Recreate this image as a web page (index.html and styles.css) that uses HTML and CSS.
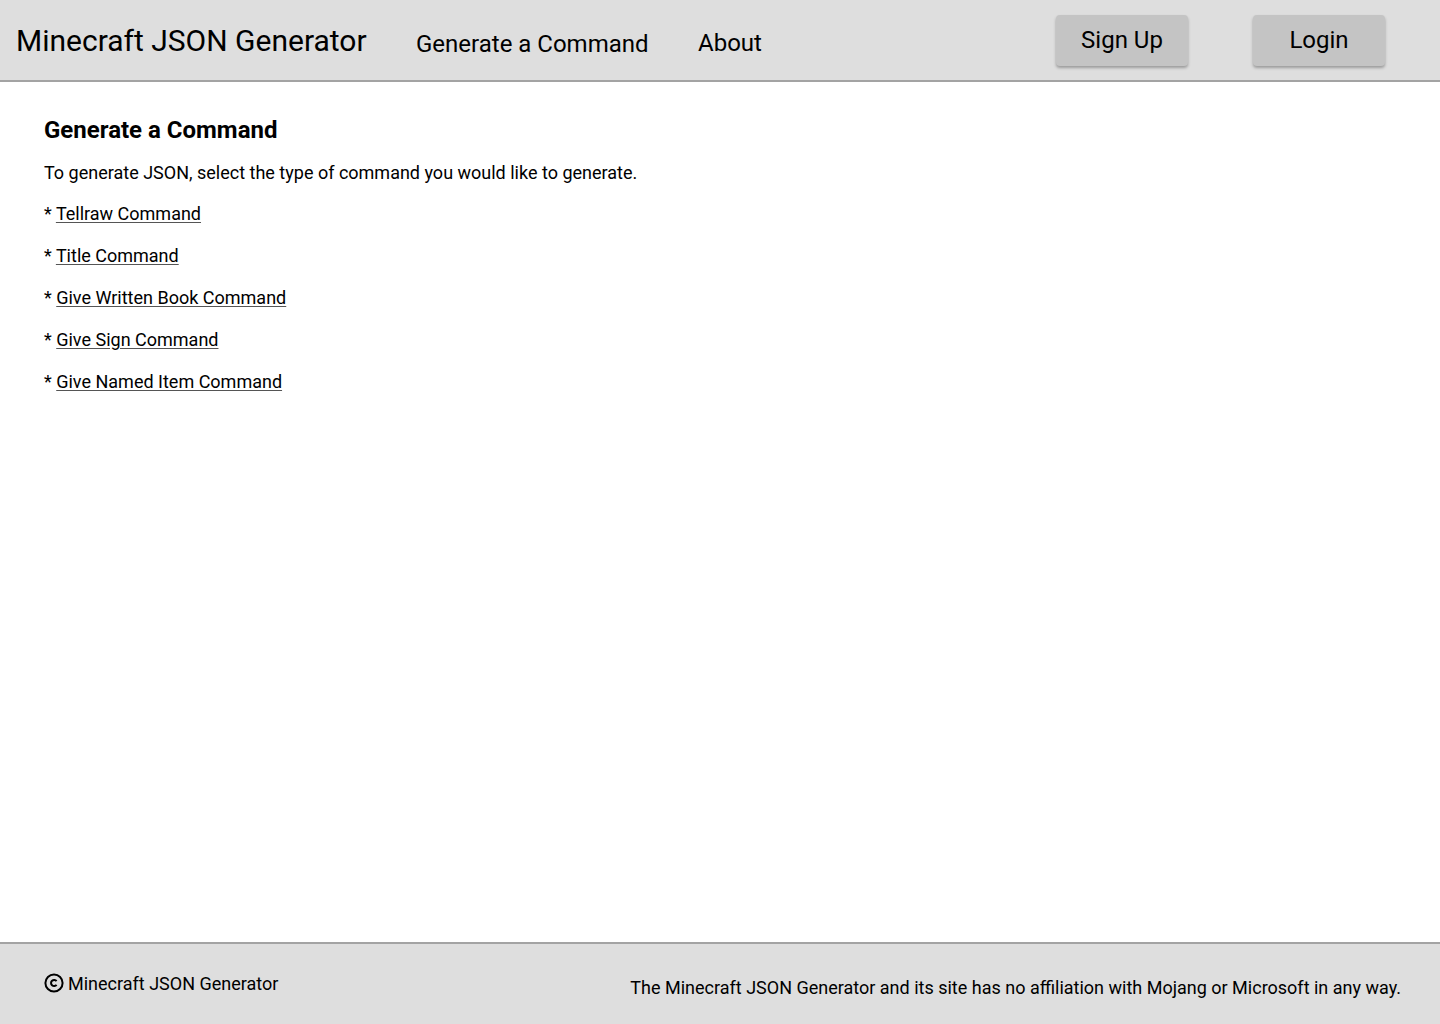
FILE: index.html
```html
<!DOCTYPE html>
<html lang="en">
<head>
<meta charset="utf-8">
<title>Minecraft JSON Generator</title>
<link rel="stylesheet" href="styles.css">
</head>
<body>
<div class="page">
  <header class="topbar">
    <div class="brand">Minecraft JSON Generator</div>
    <nav class="nav">
      <a class="nav-link nav-gen" href="#">Generate a Command</a>
      <a class="nav-link nav-about" href="#">About</a>
    </nav>
    <div class="actions">
      <button class="btn">Sign Up</button>
      <button class="btn">Login</button>
    </div>
  </header>
  <main class="content">
    <h1 class="title">Generate a Command</h1>
    <p class="intro">To generate JSON, select the type of command you would like to generate.</p>
    <ul class="cmd-list">
      <li>* <a href="#">Tellraw Command</a></li>
      <li>* <a href="#">Title Command</a></li>
      <li>* <a href="#">Give Written Book Command</a></li>
      <li>* <a href="#">Give Sign Command</a></li>
      <li>* <a href="#">Give Named Item Command</a></li>
    </ul>
  </main>
  <footer class="footer">
    <div class="copy"><svg class="copy-icon" width="20" height="20" viewBox="0 0 20 20"><circle cx="10" cy="10" r="8.6" fill="none" stroke="#000" stroke-width="2"/><path d="M12.6 8.1 A3.1 3.1 0 1 0 12.6 11.9" fill="none" stroke="#000" stroke-width="2"/></svg><span>Minecraft JSON Generator</span></div>
    <div class="disclaimer">The Minecraft JSON Generator and its site has no affiliation with Mojang or Microsoft in any way.</div>
  </footer>
</div>
</body>
</html>
```

FILE: styles.css
```css
* { box-sizing: border-box; }
html, body { margin: 0; padding: 0; }
body {
  font-family: Roboto, "Noto Sans", Arial, sans-serif;
  color: #000;
  background: #fff;
}
.page {
  display: flex;
  flex-direction: column;
  min-height: 1024px;
}
.topbar {
  height: 82px;
  background: #dedede;
  border-bottom: 2px solid #a3a3a3;
  display: flex;
  align-items: flex-start;
  padding-left: 16px;
}
.brand {
  font-size: 30px;
  line-height: 30px;
  margin-top: 26px;
  width: 400px;
}
.nav {
  display: flex;
  margin-top: 31px;
}
.nav-link {
  color: #000;
  text-decoration: none;
  font-size: 24px;
  line-height: 26px;
}
.nav-gen { width: 282px; }
.nav-about { margin-top: -1px; }
.actions {
  margin-left: auto;
  margin-right: 55px;
  margin-top: 15px;
  display: flex;
  gap: 65px;
}
.btn {
  width: 132px;
  height: 51px;
  background: #c4c4c4;
  border: none;
  border-radius: 4px;
  box-shadow: 0 2px 3px rgba(0,0,0,0.3);
  font-family: inherit;
  font-size: 24px;
  color: #000;
  padding: 0 0 1px 0;
}
.content {
  flex: 1;
  padding: 34px 44px 0 44px;
}
.title {
  font-size: 24px;
  font-weight: 700;
  margin: 0 0 18px 0;
  line-height: 28px;
}
.intro {
  font-size: 18px;
  margin: 0;
  line-height: 22px;
}
.cmd-list {
  list-style: none;
  margin: 0;
  padding: 0;
}
.cmd-list li {
  font-size: 18px;
  line-height: 22px;
  margin-top: 20px;
}
.cmd-list li:first-child { margin-top: 19px; }
.cmd-list a {
  color: #000;
  text-decoration: underline;
  text-underline-offset: 2px;
  text-decoration-color: #555;
}
.footer {
  height: 82px;
  background: #dedede;
  border-top: 2px solid #a3a3a3;
  display: flex;
  justify-content: space-between;
  padding: 0 39px 0 44px;
}
.copy {
  display: flex;
  align-items: center;
  gap: 4px;
  font-size: 18px;
  margin-top: 28px;
  height: 22px;
}
.copy-icon { display: block; }
.disclaimer {
  font-size: 18px;
  line-height: 22px;
  margin-top: 33px;
}
```
